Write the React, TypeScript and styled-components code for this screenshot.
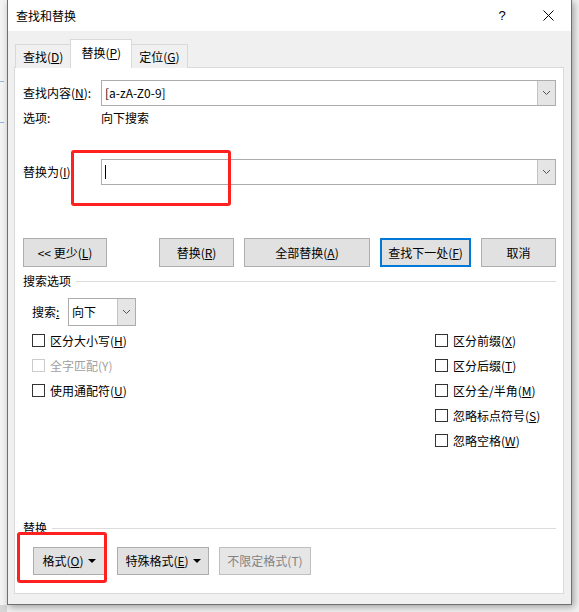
import React from 'react';
import styled, { createGlobalStyle, css } from 'styled-components';

const GlobalStyle = createGlobalStyle`
  html, body {
    margin: 0;
    padding: 0;
    background: #f1f1f1;
  }
  body {
    font-family: "Noto Sans CJK SC", "Microsoft YaHei", sans-serif;
    font-size: 12px;
    color: #000;
  }
`;

const Screen = styled.div`
  width: 579px;
  height: 612px;
  overflow: hidden;
  display: flex;
  align-items: flex-start;
  background: #f1f1f1;
`;

const DocEdge = styled.div`
  width: 7px;
  height: 100%;
  flex: none;
  background:
    linear-gradient(#8fb4de, #8fb4de) 0 81px / 4px 1px no-repeat,
    linear-gradient(#8fb4de, #8fb4de) 0 122px / 4px 1px no-repeat,
    linear-gradient(#d6d6d6, #d6d6d6) 0 605px / 7px 7px no-repeat,
    #f3f3f3;
`;

const Window = styled.div`
  width: 565px;
  height: 605px;
  flex: none;
  box-sizing: border-box;
  border: 1px solid #6f6f6f;
  border-top: none;
  display: flex;
  flex-direction: column;
  background: #f0f0f0;
  box-shadow: 2px 2px 7px rgba(0, 0, 0, 0.35);
`;

const TitleBar = styled.div`
  height: 31px;
  flex: none;
  background: #fff;
  display: flex;
  align-items: center;
  padding-left: 8px;
`;

const Title = styled.div`
  flex: 1;
  font-size: 12px;
  line-height: 16px;
`;

const CaptionButton = styled.div`
  width: 46px;
  height: 31px;
  display: flex;
  align-items: center;
  justify-content: center;
  font-family: "Liberation Sans", sans-serif;
  font-size: 13px;
`;

const Body = styled.div`
  flex: 1;
  display: flex;
  flex-direction: column;
  padding: 9px 7px 10px 6px;
`;

const TabStrip = styled.div`
  display: flex;
  align-items: flex-end;
  padding-left: 1px;
  height: 28px;
  margin-bottom: -1px;
  position: relative;
  z-index: 1;
`;

const Tab = styled.div<{ $active?: boolean }>`
  box-sizing: border-box;
  height: 24px;
  padding: 0 7px;
  border: 1px solid #d9d9d9;
  border-bottom: none;
  background: #f0f0f0;
  display: flex;
  align-items: center;
  line-height: 16px;
  margin-left: -1px;
  &:first-child {
    margin-left: 0;
  }
  ${({ $active }) =>
    $active &&
    css`
      height: 29px;
      padding: 0 10px 2px;
      background: #fff;
      position: relative;
      z-index: 1;
    `}
`;

const Panel = styled.div`
  flex: 1;
  position: relative;
  background: #fff;
  border: 1px solid #d9d9d9;
  padding: 12px 7px 18px 8px;
  display: flex;
  flex-direction: column;
`;

const FieldRow = styled.div<{ $top?: number }>`
  display: flex;
  align-items: center;
  margin-top: ${({ $top }) => $top ?? 0}px;
`;

const FieldLabel = styled.div<{ $width?: number; $indent?: number }>`
  width: ${({ $width }) => $width ?? 78}px;
  padding-left: ${({ $indent }) => $indent ?? 0}px;
  box-sizing: border-box;
  flex: none;
  line-height: 16px;
  white-space: nowrap;
`;

const InfoRow = styled.div`
  height: 24px;
  display: flex;
  align-items: center;
  line-height: 16px;
`;

const Combo = styled.div<{ $width?: number; $height?: number }>`
  ${({ $width }) => ($width ? `width: ${$width}px;` : 'flex: 1;')}
  height: ${({ $height }) => $height ?? 26}px;
  box-sizing: border-box;
  border: 1px solid #acacac;
  display: flex;
  background: #fff;
`;

const ComboText = styled.div`
  flex: 1;
  display: flex;
  align-items: center;
  padding-left: 3px;
  line-height: 16px;
  white-space: nowrap;
`;

const Caret = styled.span`
  display: inline-block;
  width: 1px;
  height: 14px;
  background: #000;
`;

const ComboArrow = styled.div`
  width: 17px;
  flex: none;
  background: #e5e5e5;
  border-left: 1px solid #c4c4c4;
  display: flex;
  align-items: center;
  justify-content: center;
`;

const ButtonRow = styled.div<{ $top?: number }>`
  display: flex;
  align-items: center;
  gap: 10px;
  margin-top: ${({ $top }) => $top ?? 0}px;
`;

const Spacer = styled.div`
  flex: 1;
`;

const Button = styled.div<{ $width: number; $height?: number; $default?: boolean; $disabled?: boolean; $gap?: number }>`
  width: ${({ $width }) => $width}px;
  height: ${({ $height }) => $height ?? 29}px;
  box-sizing: border-box;
  flex: none;
  display: flex;
  align-items: center;
  justify-content: center;
  gap: 4px;
  background: #e1e1e1;
  border: 1px solid #adadad;
  line-height: 16px;
  white-space: nowrap;
  margin-left: ${({ $gap }) => $gap ?? 0}px;
  ${({ $default }) =>
    $default &&
    css`
      border: 2px solid #0078d7;
    `}
  ${({ $disabled }) =>
    $disabled &&
    css`
      color: #838383;
      border-color: #bfbfbf;
      background: #e6e6e6;
    `}
`;

const SectionHeader = styled.div<{ $top?: number }>`
  display: flex;
  align-items: center;
  gap: 5px;
  line-height: 16px;
  margin-top: ${({ $top }) => $top ?? 0}px;
  &::after {
    content: '';
    flex: 1;
    height: 1px;
    background: #dcdcdc;
  }
`;

const OptionColumns = styled.div`
  display: flex;
  margin-top: 2px;
  padding-left: 9px;
`;

const OptionColumn = styled.div<{ $width?: number }>`
  ${({ $width }) => ($width ? `width: ${$width}px;` : 'flex: 1;')}
  display: flex;
  flex-direction: column;
`;

const CheckRow = styled.label<{ $disabled?: boolean }>`
  height: 25px;
  display: flex;
  align-items: center;
  gap: 5px;
  line-height: 16px;
  white-space: nowrap;
  color: ${({ $disabled }) => ($disabled ? '#a0a0a0' : '#000')};
`;

const Box = styled.span<{ $disabled?: boolean }>`
  width: 13px;
  height: 13px;
  box-sizing: border-box;
  flex: none;
  background: #fff;
  border: 1px solid ${({ $disabled }) => ($disabled ? '#cccccc' : '#333333')};
`;

const BottomSection = styled.div`
  margin-top: auto;
  display: flex;
  flex-direction: column;
`;

const Highlight = styled.div<{ $left: number; $top: number; $width: number; $height: number }>`
  position: absolute;
  left: ${({ $left }) => $left}px;
  top: ${({ $top }) => $top}px;
  width: ${({ $width }) => $width}px;
  height: ${({ $height }) => $height}px;
  box-sizing: border-box;
  border: 3px solid #ff2020;
  border-radius: 3px;
  pointer-events: none;
`;

const Chevron = () => (
  <svg width="9" height="6" viewBox="0 0 9 6">
    <path d="M1 1 L4.5 4.5 L8 1" fill="none" stroke="#555" strokeWidth="1" />
  </svg>
);

const DropTriangle = () => (
  <svg width="8" height="4" viewBox="0 0 8 4">
    <path d="M0 0 H8 L4 4 Z" fill="#000" />
  </svg>
);

const CloseGlyph = () => (
  <svg width="11" height="11" viewBox="0 0 11 11">
    <path d="M0.5 0.5 L10.5 10.5 M10.5 0.5 L0.5 10.5" stroke="#000" strokeWidth="1" />
  </svg>
);

const leftOptions = [
  { text: '区分大小写', key: 'H' },
  { text: '全字匹配', key: 'Y', disabled: true },
  { text: '使用通配符', key: 'U' },
];

const rightOptions = [
  { text: '区分前缀', key: 'X' },
  { text: '区分后缀', key: 'T' },
  { text: '区分全/半角', key: 'M' },
  { text: '忽略标点符号', key: 'S' },
  { text: '忽略空格', key: 'W' },
];

const Option = ({ text, hotkey, disabled }: { text: string; hotkey: string; disabled?: boolean }) => (
  <CheckRow $disabled={disabled}>
    <Box $disabled={disabled} />
    <span>
      {text}({disabled ? hotkey : <u>{hotkey}</u>})
    </span>
  </CheckRow>
);

const App = () => (
  <>
    <GlobalStyle />
    <Screen>
      <DocEdge />
      <Window>
        <TitleBar>
          <Title>查找和替换</Title>
          <CaptionButton>?</CaptionButton>
          <CaptionButton>
            <CloseGlyph />
          </CaptionButton>
        </TitleBar>
        <Body>
          <TabStrip>
            <Tab>
              <span>
                查找(<u>D</u>)
              </span>
            </Tab>
            <Tab $active>
              <span>
                替换(<u>P</u>)
              </span>
            </Tab>
            <Tab>
              <span>
                定位(<u>G</u>)
              </span>
            </Tab>
          </TabStrip>
          <Panel>
            <FieldRow>
              <FieldLabel>
                查找内容(<u>N</u>):
              </FieldLabel>
              <Combo>
                <ComboText>[a-zA-Z0-9]</ComboText>
                <ComboArrow>
                  <Chevron />
                </ComboArrow>
              </Combo>
            </FieldRow>
            <InfoRow>
              <FieldLabel>选项:</FieldLabel>
              <span>向下搜索</span>
            </InfoRow>
            <FieldRow $top={29}>
              <FieldLabel>
                替换为(<u>I</u>)
              </FieldLabel>
              <Combo>
                <ComboText>
                  <Caret />
                </ComboText>
                <ComboArrow>
                  <Chevron />
                </ComboArrow>
              </Combo>
            </FieldRow>

            <ButtonRow $top={53}>
              <Button $width={84}>
                <span>
                  &lt;&lt; 更少(<u>L</u>)
                </span>
              </Button>
              <Spacer />
              <Button $width={75}>
                <span>
                  替换(<u>R</u>)
                </span>
              </Button>
              <Button $width={126}>
                <span>
                  全部替换(<u>A</u>)
                </span>
              </Button>
              <Button $width={91} $default>
                <span>
                  查找下一处(<u>F</u>)
                </span>
              </Button>
              <Button $width={75}>
                <span>取消</span>
              </Button>
            </ButtonRow>

            <SectionHeader $top={6}>搜索选项</SectionHeader>
            <FieldRow $top={9}>
              <FieldLabel $width={45} $indent={9}>
                搜索<u>:</u>
              </FieldLabel>
              <Combo $width={68} $height={28}>
                <ComboText>向下</ComboText>
                <ComboArrow>
                  <Chevron />
                </ComboArrow>
              </Combo>
            </FieldRow>

            <OptionColumns>
              <OptionColumn>
                {leftOptions.map((o) => (
                  <Option key={o.key} text={o.text} hotkey={o.key} disabled={o.disabled} />
                ))}
              </OptionColumn>
              <OptionColumn $width={121}>
                {rightOptions.map((o) => (
                  <Option key={o.key} text={o.text} hotkey={o.key} />
                ))}
              </OptionColumn>
            </OptionColumns>

            <BottomSection>
              <SectionHeader>替换</SectionHeader>
              <ButtonRow $top={11}>
                <Button $width={72} $height={28} $gap={10}>
                  <span>
                    格式(<u>O</u>)
                  </span>
                  <DropTriangle />
                </Button>
                <Button $width={92} $height={28} $gap={2}>
                  <span>
                    特殊格式(<u>E</u>)
                  </span>
                  <DropTriangle />
                </Button>
                <Button $width={92} $height={28} $disabled>
                  <span>不限定格式(T)</span>
                </Button>
              </ButtonRow>
            </BottomSection>

            <Highlight $left={56} $top={82} $width={160} $height={56} />
            <Highlight $left={2} $top={464} $width={90} $height={51} />
          </Panel>
        </Body>
      </Window>
    </Screen>
  </>
);

export default App;
